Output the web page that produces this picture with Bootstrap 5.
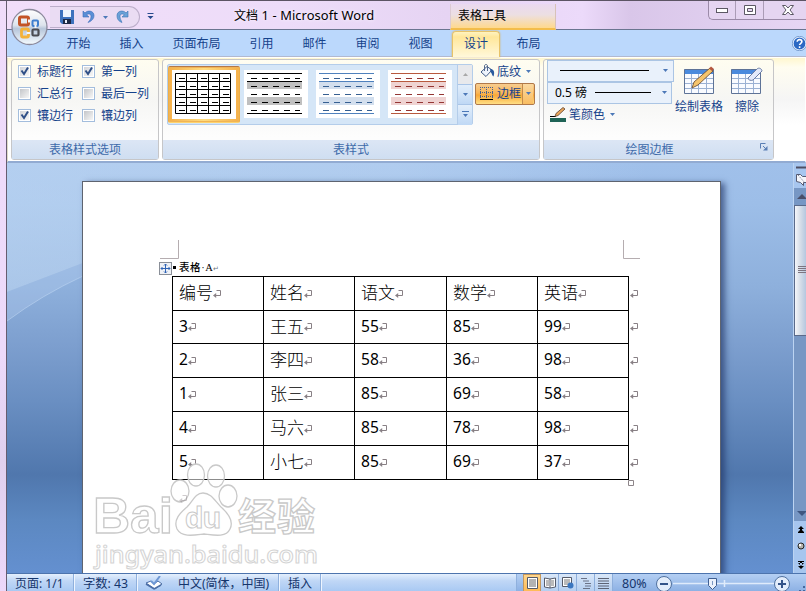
<!DOCTYPE html>
<html lang="zh-CN">
<head>
<meta charset="utf-8">
<title>文档 1 - Microsoft Word</title>
<link href="https://cdn.jsdelivr.net/npm/bootstrap@5.3.0/dist/css/bootstrap.min.css" rel="stylesheet">
<style>
body{width:806px;height:591px;overflow:hidden;font:12px/16px "Noto Sans","Noto Sans CJK SC",sans-serif;color:#15428b;background:#ecdcf8}
svg{display:block;flex:none}
.win{width:806px;height:591px;border-top:1px solid #5c5464}
.edge{width:7px;background:linear-gradient(#f0dcfa,#ecdafa 60%,#e0d0ee 78%,#ecd8fa);border-right:1px solid #665d70}
.titlebar{height:29px;background:linear-gradient(90deg,#f1def9 0,#eddcf9 35%,#e6d4f3 55%,#ecdafa 72%,#d9c6e9 78%,#e6d6f4);border-bottom:1px solid #6a7590;color:#000}
.qat{width:90px;height:22px;margin:5px 0 0 43px;padding-left:10px;border:1px solid #bcaeca;border-left:0;border-radius:0 11px 11px 0;background:#eadcf3}
.doctitle{left:227px;top:6px;letter-spacing:.08px;font-size:12.9px;text-shadow:0 0 4px #fff}
.doctitle .zh{font-size:12px}
.ctx{left:443px;top:3px;width:106px;height:26px;padding:4px 0 0 7px;background:linear-gradient(#ead9f0,#ecdfe2 45%,#ffd98d);border-right:1px solid #d8c2b8;border-left:1px solid #dccbd4;border-bottom:2px solid #f3bd4c}
.winbtns{right:0;top:0;width:98px;height:19px;border:1px solid #9b8aa8;border-top:0;border-right:0;border-radius:0 0 0 5px;background:#e5d5f1}
.winbtns>div{width:28px;border-right:1px solid #ab9cb6}
.winbtns>div:last-child{width:43px;border:0;padding-left:6px}
.orb{left:11px;top:7px;z-index:3}
.tabs{height:27px;background:#bbd8fc;padding-left:45px;padding-top:1px;border-bottom:1px solid #b2b9cf}
.tab{padding:5px 14.500px 0;height:26px}
.tab.on{background:linear-gradient(#fff3c0,#ffe79a 20%,#fff8da);border:1px solid #e8c368;border-bottom:0;border-radius:4px 4px 0 0;padding:4px 11px 0;width:48px;margin-left:-1px;margin-left:5px;margin-right:2px;box-shadow:0 0 2px #d6ae55}
.ribbon{height:106px;padding:1px 0 0 3px;gap:3px;background:linear-gradient(#fff7cf,#fffdf0 9%,#f5f5f5 40%,#fff 65%);border:1px solid #fff;border-bottom:2px solid #92abd2;border-left:1px solid #e0dbc8}
.grp{height:101px;border:1px solid #c6c6c8;border-radius:3px;background:linear-gradient(#fffdf0,#f6f6f4 40%,#fdfdfd 78%)}
.grp footer{height:19px;background:linear-gradient(#dce6f5,#cfdef1);color:#3d6aaa;text-align:center;line-height:19px}
.opts{padding:1px 0 0 6px}
.opts>div{height:22px}
.opt{width:64px}
.ck{width:13px;height:13px;border:1px solid #a3bddd;background:#fff;padding:1px;margin-right:6px}
.ck svg{background:linear-gradient(135deg,#d3d5d9,#f7f7f7)}
.ck>span{width:9px;height:9px;background:linear-gradient(135deg,#c3c5c9,#f7f7f7)}
.gal{width:306px;height:61px;margin:4px 0 0 4px;border:1px solid #b4cdea;border-radius:2px;background:#d5e6f7}
.pick{width:72px;height:57px;margin-top:1px;border:1px solid #b57848;border-color:#b57848 #efae46 #ffd36c;background:linear-gradient(90deg,#f5b04a,#ffdc80,#f5b04a);padding:3px 3px;border-radius:2px;box-shadow:inset 0 0 0 1px #f0b455}
.pick svg,.thumb{background:#fff}
.gscroll{width:15px;border-left:1px solid #b4cdea}
.gscroll>div{height:20px;background:linear-gradient(#e2eefb,#bfd8f5);border-bottom:1px solid #a9c5e8}
.rbtn{height:22px;width:60px;padding-left:5px}
.hot{border:1px solid #b0794a;border-radius:2px;background:linear-gradient(#f7cd90,#f9b557 45%,#f9a837 55%,#ffdf85);padding-left:4px}
.hot .split{height:20px;width:11px;border-left:1px solid #c28b4d;background:linear-gradient(#fbd9a0,#f9bd61)}
.combo{height:22px;border:1px solid #abc5e4;background:#e9f1fb;color:#000;padding-left:8px}
.work{height:411px;background:linear-gradient(#a0c0ea,#9dbee8 10%,#8eb0dc 30%,#7c9ece 45%,#6a8fc2 58%,#5077ad 76%,#5c88c1 87%,#6490d0)}
.paper{left:75px;top:18px;width:639px;height:400px;background:#fff;border:1px solid #5e6470;box-shadow:4px 2px 6px rgba(30,50,100,.65)}
.grid{border-collapse:collapse;table-layout:fixed;width:470px;color:#000;font-size:15.600px;line-height:20px;margin:0 0 0 89px}
.grid td{border:1px solid #000;padding:0 0 2px 6px;height:34px;vertical-align:middle}
.grid tr:nth-child(2) td{height:33px}
.grid td.eol{border:0;padding-left:1px}
.grid tr:first-child td,.grid td.cj{font-size:17px;font-weight:300;font-family:"Noto Sans CJK SC",sans-serif}
.ln svg{margin-top:4px}
.cap{height:14px;margin:80px 0 0 76px;color:#000;font:600 10.500px/14px "Liberation Serif","Noto Sans CJK SC",serif}
.vs{right:0;top:0;width:13px;height:411px;background:#a7c6ef;border-left:1px solid #bcd4f2;overflow:hidden}
.track{height:333px;background:#7797c4}
.knob{height:131px;border:1px solid #5a6a8a;border-right:0;background:linear-gradient(90deg,#f4f6fa,#d8dfe9 45%,#b4c7df)}
.status{height:18px;border-top:1px solid #4d74ad;background:linear-gradient(#e4effd,#c0d7f6 40%,#a9c9f3);color:#15356b}
.status .cell{height:18px;line-height:20px;border-right:1px solid #8fb0dd;box-shadow:1px 0 #eef5ff;white-space:nowrap}
.views{width:289px;padding-left:6px;background:linear-gradient(#b4cff3,#8db1e4)}
.views .vb{width:18px;height:18px;border-right:1px solid #8daedb;background:linear-gradient(#d9e7f9,#b2cdf0)}
.views .vb.on{background:linear-gradient(#ffd68c,#ffbb57);border:1px solid #c4985e}
</style>
<script src="https://cdn.jsdelivr.net/npm/bootstrap@5.3.0/dist/js/bootstrap.bundle.min.js"></script>
</head>
<body>
<svg width="0" height="0" class="position-absolute">
<defs>
<symbol id="ret" viewBox="0 0 8 9"><path d="M3.500.5h4v5H2" fill="none" stroke="#888085"/><path d="M0 5.500L3.200 3v5z" fill="#888085"/></symbol>
<symbol id="dn" viewBox="0 0 5 3"><path d="M0 0h5L2.500 3z" fill="#4c78b8"/></symbol>
<symbol id="ckm" viewBox="0 0 9 9"><path d="M1.500 3.500L4 7l4-6.500" fill="none" stroke="#2f4f87" stroke-width="2"/></symbol>
<linearGradient id="og" x1="0" y1="0" x2="0" y2="1"><stop stop-color="#fff"/><stop offset=".45" stop-color="#dde3ec"/><stop offset=".55" stop-color="#b7c6da"/><stop offset="1" stop-color="#f5fbff"/></linearGradient>
<linearGradient id="sky"><stop stop-color="#c8def6"/><stop offset=".6" stop-color="#c8def6" stop-opacity=".8"/><stop offset="1" stop-color="#c8def6" stop-opacity="0"/></linearGradient>
</defs>
</svg>
<div class="win d-flex position-relative">
  <svg class="orb position-absolute" width="38" height="38" viewBox="0 0 38 38">
    <circle cx="18.500" cy="19" r="17.500" fill="url(#og)" stroke="#8c8a9d" stroke-width="1.300"/>
    <g fill="none"><rect x="8.500" y="9" width="9" height="8" rx="1.500" stroke="#c35325" stroke-width="3"/><rect x="21.500" y="12.500" width="5.500" height="5.500" rx="1" stroke="#3f7fcf" stroke-width="2"/><rect x="10.500" y="21" width="7" height="8" rx="1.500" stroke="#f4b23a" stroke-width="2.800"/><rect x="21.500" y="21.500" width="6" height="6" rx="1" stroke="#4a4b52" stroke-width="2.200"/></g>
    <path d="M18 11.500v3M15.500 25h4M24.500 17v3" stroke="#f5f7fb" stroke-width="2"/>
  </svg>
  <div class="edge flex-shrink-0"></div>
  <div class="d-flex flex-column flex-grow-1">
    <header class="titlebar position-relative">
      <div class="d-flex">
        <div class="qat d-flex align-items-center">
          <svg width="14" height="14" viewBox="0 0 14 14"><path d="M0 0h14v14H2L0 12z" fill="#3d72bd"/><path d="M3 0h8v7H3z" fill="#eef4fd"/><path d="M3 9h8v5H3z" fill="#1c2946"/><path d="M5 10h2v3H5z" fill="#e8eefa"/></svg>
          <svg class="ms-2" width="13" height="14" viewBox="0 0 13 14"><path d="M1 1v6h6L4.600 4.800C7 3 9 4 9 6.500S8 10 6 12.500c4-1.500 6-4 6-7C12 1 6-.5 3 3z" fill="#5a8fd6" stroke="#3c6cb8" stroke-width=".6"/></svg>
          <svg class="ms-2" width="5" height="3"><use href="#dn"/></svg>
          <svg class="ms-2" width="13" height="14" viewBox="0 0 13 14"><path d="M12 1v6H6l2.400-2.200C6 3 4 4 4 6.500S5 10 6 12.500C2 11 1 8.500 1 5.500 1 1 7-.5 10 3z" fill="#6aa2d8" stroke="#3a72b4" stroke-width=".6"/></svg>
        </div>
        <svg style="margin:12px 0 0 7px" width="7" height="7" viewBox="0 0 7 7"><path d="M.5 0h6v1h-6zM.5 3h6l-3 3z" fill="#26498c"/></svg>
      </div>
      <div class="doctitle position-absolute text-nowrap"><span class="zh">文档</span> 1 - Microsoft Word</div>
      <div class="ctx position-absolute">表格工具</div>
      <div class="winbtns position-absolute d-flex">
        <div class="d-flex align-items-center justify-content-center"><svg width="12" height="5"><rect x=".5" y=".5" width="11" height="4" fill="#fff" stroke="#5c5864"/></svg></div>
        <div class="d-flex align-items-center justify-content-center"><svg width="12" height="10"><path d="M.5.5h11v9H.5zM3.500 3.500h5v3h-5z" fill="#fff" stroke="#5c5864" fill-rule="evenodd"/></svg></div>
        <div class="d-flex align-items-center justify-content-center"><svg width="12" height="10" viewBox="0 0 12 10"><path d="M.5.5h3.200L6 3 8.300.5h3.200L8 5l3.500 4.500H8.300L6 7 3.700 9.500H.5L4 5z" fill="#fff" stroke="#5c5864"/></svg></div>
      </div>
    </header>
    <nav class="tabs d-flex position-relative">
      <div class="tab">开始</div><div class="tab">插入</div><div class="tab">页面布局</div><div class="tab">引用</div><div class="tab">邮件</div><div class="tab">审阅</div><div class="tab">视图</div><div class="tab on">设计</div><div class="tab">布局</div>
      <svg class="position-absolute end-0" style="top:6px;margin-right:-1px" width="15" height="15" viewBox="0 0 15 15"><circle cx="7.500" cy="7.500" r="6.500" fill="#2c69c4" stroke="#eaf2ff" stroke-width="1.200"/><circle cx="7.500" cy="7.500" r="7.200" fill="none" stroke="#4975b4" stroke-width=".6"/><path d="M5.200 5.800c0-3 4.700-2.700 4.700 0 0 1.500-2.300 1.500-2.300 3.200M7.600 10.300v1.700" fill="none" stroke="#fff" stroke-width="1.600"/></svg>
    </nav>
    <div class="ribbon d-flex">
      <section class="grp d-flex flex-column" style="width:148px">
        <div class="opts flex-grow-1">
          <div class="d-flex align-items-center"><div class="opt d-flex align-items-center"><span class="ck"><svg width="9" height="9"><use href="#ckm"/></svg></span>标题行</div><div class="opt d-flex align-items-center"><span class="ck"><svg width="9" height="9"><use href="#ckm"/></svg></span>第一列</div></div>
          <div class="d-flex align-items-center"><div class="opt d-flex align-items-center"><span class="ck"><span class="d-block"></span></span>汇总行</div><div class="opt d-flex align-items-center text-nowrap"><span class="ck flex-shrink-0"><span class="d-block"></span></span>最后一列</div></div>
          <div class="d-flex align-items-center"><div class="opt d-flex align-items-center"><span class="ck"><svg width="9" height="9"><use href="#ckm"/></svg></span>镶边行</div><div class="opt d-flex align-items-center"><span class="ck"><span class="d-block"></span></span>镶边列</div></div>
        </div>
        <footer>表格样式选项</footer>
      </section>
      <section class="grp d-flex flex-column" style="width:378px">
        <div class="d-flex flex-grow-1">
          <div class="gal d-flex">
            <div class="pick"><svg width="64" height="49" viewBox="1 0 64 49"><path d="M4.500 3.500h55v40h-55zM4.500 11.500h55M4.500 19.500h55M4.500 27.500h55M4.500 35.500h55M15.500 3v41M26.500 3v41M37.500 3v41M48.500 3v41" fill="none" stroke="#000"/><path d="M8 8.500h51M8 16.500h51M8 24.500h51M8 32.500h51M8 40.500h51" stroke="#000" stroke-dasharray="6 5"/></svg></div>
            <svg class="thumb" style="margin:5px 0 0 4px" width="64" height="48" viewBox="0 0 64 48"><path d="M3 12h55v7H3zM3 27h55v8H3z" fill="#c0c0c0"/><path d="M3 3.500h55M3 11.500h55M3 43.500h55" stroke="#000"/><path d="M7 8.500h49M7 16.500h49M7 24.500h49M7 32.500h49M7 40.500h49" stroke="#000" stroke-dasharray="6 5"/></svg>
            <svg class="thumb" style="margin:5px 0 0 8px" width="64" height="48" viewBox="0 0 64 48"><path d="M3 12h55v7H3zM3 27h55v8H3z" fill="#d3dfee"/><path d="M3 3.500h55M3 11.500h55M3 43.500h55" stroke="#4f81bd"/><path d="M7 8.500h49M7 16.500h49M7 24.500h49M7 32.500h49M7 40.500h49" stroke="#365f91" stroke-dasharray="6 5"/></svg>
            <svg class="thumb" style="margin:5px 5px 0 8px" width="64" height="48" viewBox="0 0 64 48"><path d="M3 12h55v7H3zM3 27h55v8H3z" fill="#efd3d2"/><path d="M3 3.500h55M3 11.500h55M3 43.500h55" stroke="#b8593e"/><path d="M7 8.500h49M7 16.500h49M7 24.500h49M7 32.500h49M7 40.500h49" stroke="#943634" stroke-dasharray="6 5"/></svg>
            <div class="gscroll">
              <div class="d-flex align-items-center justify-content-center" style="background:#e8e9ec"><svg width="5" height="3"><path d="M0 3h5L2.500 0z" fill="#a8a8a8"/></svg></div>
              <div class="d-flex align-items-center justify-content-center"><svg width="5" height="3"><use href="#dn"/></svg></div>
              <div class="d-flex align-items-center justify-content-center border-0"><svg width="7" height="7" viewBox="0 0 7 7"><path d="M0 0h7v1H0zM1 3h5L3.500 6z" fill="#4c78b8"/></svg></div>
            </div>
          </div>
          <div style="margin-left:2px;padding-top:1px">
            <div class="rbtn d-flex align-items-center text-nowrap">
              <svg width="15" height="15" viewBox="0 0 15 15"><path d="M7 2.500L1 8l5 4.500L12 6z" fill="#eef4fc" stroke="#405a86"/><path d="M4.500 7V2c0-2 3-2 3 0v5" fill="none" stroke="#53688c"/><path d="M10 5c4 0 5 3 3.500 7.500C12 12 12 9 10.500 8z" fill="#2b5a9e"/></svg>
              <span style="margin-left:2px">底纹</span><svg style="margin-left:5px" width="5" height="3"><use href="#dn"/></svg>
            </div>
            <div class="rbtn hot d-flex align-items-center text-nowrap">
              <svg width="14" height="14" viewBox="0 0 14 14"><path d="M.5 0v11M6.500 0v11M12.500 0v11M0 .5h13M0 5.500h13M0 9.500h13" stroke="#48618e" stroke-dasharray="1 1"/><path d="M0 12.500h13" stroke="#000"/></svg>
              <span style="margin:0 1px 0 3px">边框</span><span class="split d-flex align-items-center justify-content-center"><svg width="5" height="3"><use href="#dn"/></svg></span>
            </div>
          </div>
        </div>
        <footer>表样式</footer>
      </section>
      <section class="grp d-flex flex-column" style="width:231px">
        <div class="d-flex flex-grow-1">
          <div style="margin-left:3px">
            <div class="combo d-flex align-items-center" style="width:127px"><svg class="ms-1" width="89" height="1"><path d="M0 .5h89" stroke="#000"/></svg><svg style="margin-left:14px" width="5" height="3"><use href="#dn"/></svg></div>
            <div class="combo d-flex align-items-center" style="width:125px;padding-left:7px"><span style="width:40px">0.5 磅</span><svg width="56" height="1"><path d="M0 .5h56" stroke="#000"/></svg><svg style="margin-left:11px" width="5" height="3"><use href="#dn"/></svg></div>
            <div class="d-flex align-items-center" style="height:22px;padding-left:3px"><svg width="16" height="15" viewBox="0 0 16 15"><path d="M0 9.500h6" stroke="#000"/><path d="M5 9.500l1-3L13 .5l2 1.500L8 8.500z" fill="#eaa559" stroke="#5a4030" stroke-width=".8"/><path d="M0 11h16v4H0z" fill="#1f6356"/></svg><span style="margin-left:3px">笔颜色</span><svg style="margin-left:5px" width="5" height="3"><use href="#dn"/></svg></div>
          </div>
          <div class="d-flex flex-column align-items-center" style="width:50px;padding-top:6px">
            <svg width="31" height="30" viewBox="0 0 31 30"><path d="M.5 4h29v24H.5z" fill="#f9fbff"/><path d="M.5 3h29v5H.5z" fill="#4a8add"/><path d="M.5 12.500h29M.5 17.500h29M.5 22.500h29M7.500 8v20M14.500 8v20M22.500 8v20" stroke="#9bb1d3"/><path d="M.5 3.500h29v24H.5z" fill="none" stroke="#5e7397"/><path d="M8 22l2-6L26 2l3 3-15 14z" fill="#f5c46c" stroke="#6e5238" stroke-width=".9"/><path d="M25 2.500l2-2 3 2.500-2 2z" fill="#b5573f"/></svg>
            <span class="text-nowrap" style="margin-top:3px">绘制表格</span>
          </div>
          <div class="d-flex flex-column align-items-center" style="width:46px;padding-top:6px">
            <svg width="32" height="30" viewBox="0 0 32 30"><path d="M.5 4h29v24H.5z" fill="#f9fbff"/><path d="M.5 3h29v5H.5z" fill="#4a8add"/><path d="M.5 12.500h29M.5 17.500h29M.5 22.500h29M7.500 8v20M14.500 8v20M22.500 8v20" stroke="#9bb1d3"/><path d="M.5 3.500h29v24H.5z" fill="none" stroke="#5e7397"/><path d="M17 12L26 3c2-2 5 0 5 2l-9 9c-2 1-5 0-5-2z" fill="#e3eafb" stroke="#6b7da5"/></svg>
            <span style="margin-top:3px">擦除</span>
          </div>
        </div>
        <footer class="d-flex"><span class="flex-grow-1" style="padding-right:18px">绘图边框</span><svg style="margin:3px 5px 0 -13px" width="8" height="8" viewBox="0 0 8 8"><path d="M.5 5.500v-5h5M3 3l4 4" fill="none" stroke="#5a7fb5"/><path d="M7.500 3v4.500H3z" fill="#5a7fb5"/></svg></footer>
      </section>
    </div>
    <main class="work position-relative overflow-hidden">
      <svg class="position-absolute start-0 top-0" width="640" height="160"><path d="M0 0h640v20H76v80L0 129z" fill="url(#sky)" opacity=".5"/><path d="M0 129L76 100v13Q35 132 0 158z" fill="#b8d2f2" opacity=".3"/><path d="M76 113Q35 132 0 158" fill="none" stroke="#c5dcf6" opacity=".5"/></svg>
      <article class="paper position-absolute">
        <svg class="position-absolute" style="left:77px;top:57px" width="480" height="21"><path d="M0 19.500h18.500V1M463.500 1v18.500H482" fill="none" stroke="#b5adb0"/></svg>
        <div class="cap d-flex align-items-center">
          <svg width="13" height="13" viewBox="0 0 13 13"><rect x=".5" y=".5" width="12" height="12" fill="#eef1f6" stroke="#8a8f98"/><path d="M6.500 2v9M2 6.500h9M5 3.500L6.500 2 8 3.500M5 9.500L6.500 11 8 9.500M3.500 5L2 6.500 3.500 8M9.500 5L11 6.500 9.500 8" fill="none" stroke="#2d62b5"/></svg>
          <svg width="7" height="8"><path d="M1 1h3v3H1z"/></svg>
          <span style="letter-spacing:.6px;font-weight:500">表格·A<span class="fw-normal text-secondary" style="font-size:7px">↵</span></span>
        </div>
        <table class="grid">
          <colgroup><col style="width:91px"><col style="width:91px"><col style="width:92px"><col style="width:91px"><col style="width:91px"><col style="width:14px"></colgroup>
          <tbody id="rows"></tbody>
        </table>
        <svg class="position-absolute" style="left:545px;top:298px" width="6" height="6"><path d="M.5.5h5v5h-5z" fill="#fff" stroke="#8d8589"/></svg>
        <svg class="position-absolute" style="left:8px;top:278px" width="236" height="112" viewBox="91 460 236 112">
          <g fill="#fff" fill-opacity=".55" stroke="#c9c9c9" stroke-width="1.300">
            <text x="93" y="533" font-family="Liberation Sans, sans-serif" font-weight="700" font-size="50" textLength="80" lengthAdjust="spacingAndGlyphs">Bai</text>
            <ellipse cx="180" cy="491" rx="9" ry="11"/><ellipse cx="196" cy="475" rx="8.500" ry="11"/><ellipse cx="216" cy="476" rx="8.500" ry="11"/><ellipse cx="228" cy="496" rx="9" ry="11"/>
            <path d="M203 493c8 0 12 8 18 14 8 7 13 14 9 22-4 9-17 6-26 5-9 1-22 4-27-5-4-9 3-16 10-22 6-6 8-14 16-14z"/>
            <text x="185" y="528" font-family="Liberation Sans, sans-serif" font-weight="700" font-size="30" textLength="36" stroke-width="1">du</text>
            <text x="238" y="530" font-family="Noto Sans CJK SC, sans-serif" font-weight="700" font-size="38" textLength="77">经验</text>
            <text x="95" y="563" font-family="Noto Sans, sans-serif" font-size="23" font-weight="500" textLength="223" lengthAdjust="spacingAndGlyphs" stroke="#d4d4d4" stroke-width="1">jingyan.baidu.com</text>
          </g>
        </svg>
        <svg class="position-absolute" style="left:96px;top:313px" width="8" height="9" opacity=".4"><use href="#ret"/></svg>
      </article>
      <aside class="vs position-absolute">
        <svg width="13" height="25" viewBox="0 0 13 25"><path d="M2 4.500h11" stroke="#4d4e63" stroke-width="2"/><path d="M2.500 11.500h4l2 2h5v6h-4v3l-3-3-4-1z" fill="#f5f6fb" stroke="#555a72"/><path d="M4 12l7 8" stroke="#555a72" stroke-dasharray="1 1.500"/></svg>
        <div class="track">
          <svg width="13" height="17"><path d="M3 11h10L8 6z" fill="#4a4f69"/></svg>
          <div class="knob d-flex align-items-center"><svg style="margin-left:3px" width="9" height="8"><path d="M0 .5h9M0 2.500h9M0 4.500h9M0 6.500h9" stroke="#7d7480"/></svg></div>
          <svg width="13" height="185"><path d="M3 175h10l-5 5z" fill="#3f5680"/></svg>
        </div>
        <svg width="13" height="53" viewBox="0 0 13 53"><path d="M4 8l3-3 3 3zM4 11l3-3 3 3zM6 7h2v4H6zM4 11h6v1H4z"/><path d="M4 42l3 3 3-3zM4 45l3 3 3-3zM6 41h2v4H6zM4 40h6v1H4z"/><circle cx="7" cy="25" r="3" fill="#b2b2ac" stroke="#222"/><circle cx="6" cy="24" r="1.200" fill="#fff"/></svg>
      </aside>
    </main>
    <footer class="status d-flex">
      <div class="cell" style="width:67px;padding-left:8px">页面: 1/1</div>
      <div class="cell" style="width:63px;padding-left:9px;font-size:12.300px">字数: 43</div>
      <div class="cell d-flex" style="width:142px;padding-left:8px"><svg style="margin-top:2px" width="18" height="14" viewBox="0 0 18 14"><path d="M1 7l5-2 3 3 4-3 4 3-7 5z" fill="#fff" stroke="#4b6ea6"/><path d="M1 8l8 5 7-4" fill="none" stroke="#4b6ea6" stroke-width="1.500"/><path d="M6 5l3 3 6-8" fill="none" stroke="#6f98d4" stroke-width="2"/></svg><span style="margin-left:15px">中文(简体，中国)</span></div>
      <div class="cell" style="width:42px;padding-left:9px">插入</div>
      <div class="flex-grow-1 cell"></div>
      <div class="views d-flex">
        <div class="vb on d-flex align-items-center justify-content-center"><svg width="11" height="12"><path d="M.5.5h10v11H.5z" fill="#fff" stroke="#555a68"/><path d="M2 3h7M2 5h7M2 7h7M2 9h7" stroke="#666"/></svg></div>
        <div class="vb d-flex align-items-center justify-content-center"><svg width="12" height="12"><path d="M.5 1l5.500 1 5.500-1v9L6 11 .5 10zM6 2v9" fill="#fff" stroke="#555a68"/><path d="M2 4h3M7 4h3M2 6h3M7 6h3M2 8h3M7 8h3" stroke="#777"/></svg></div>
        <div class="vb d-flex align-items-center justify-content-center"><svg width="12" height="12"><path d="M.5.5h9v9h-9z" fill="#fff" stroke="#555a68"/><path d="M2 3h6M2 5h6M2 7h4" stroke="#777"/><circle cx="8.500" cy="8.500" r="3" fill="#3a76c0"/></svg></div>
        <div class="vb d-flex align-items-center justify-content-center"><svg width="10" height="11"><path d="M0 .5h6M2 3h6M4 5.500h6M4 8h6M2 10.500h7" stroke="#6b7388"/></svg></div>
        <div class="vb d-flex align-items-center justify-content-center"><svg width="11" height="11"><path d="M0 .5h11M0 3h11M0 5.500h11M0 8h11M0 10.500h11" stroke="#5d6374"/></svg></div>
        <span style="margin-left:9px;line-height:20px;width:34px;font-size:12.500px">80%</span>
        <svg width="150" height="18" viewBox="656 574 150 18"><path d="M673 583.500h102M724.500 580v7" stroke="#dfebfb" stroke-width="1.500"/><g fill="#e3edfb" stroke="#50719f"><circle cx="664" cy="584" r="7.500"/><circle cx="782" cy="584" r="7.500"/></g><path d="M660 584h8M778 584h8M782 580v8" stroke="#345489" stroke-width="2"/><path d="M708.500 578.500h8v7l-4 4-4-4z" fill="#eaf1fc" stroke="#3f5f92"/><path d="M712.500 581v4" stroke="#7b98c3"/><path d="M803 586h2v2h-2zM799 590h2v2h-2zM803 590h2v2h-2z" fill="#47689c"/></svg>
      </div>
    </footer>
  </div>
</div>
<script>
// Score table rows; every cell ends with a paragraph mark
const data=[["编号","姓名","语文","数学","英语"],["3","王五","55","85","99"],["2","李四","58","36","98"],["1","张三","85","69","58"],["4","马六","85","78","98"],["5","小七","85","69","37"]];
const mark='<svg width="8" height="9"><use href="#ret"/></svg>';
document.getElementById("rows").innerHTML=data.map((r,i)=>`<tr>${r.map((c,j)=>`<td class="${j===1?"cj":""}"><div class="ln d-flex align-items-center">${c}${mark}</div></td>`).join("")}<td class="eol"><div class="ln">${mark}</div></td></tr>`).join("");
</script>
</body>
</html>
